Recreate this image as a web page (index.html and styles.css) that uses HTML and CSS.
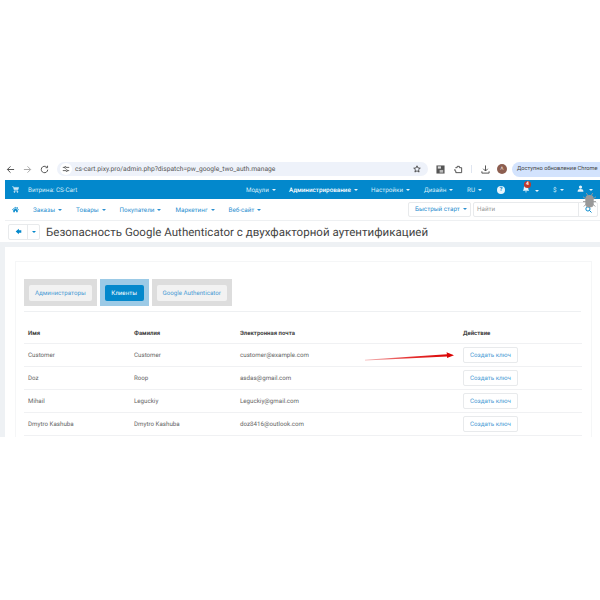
FILE: index.html
```html
<!DOCTYPE html>
<html lang="en">

<head>
    <meta charset="UTF-8">
    <title>Google Authenticator</title>
    <link rel="stylesheet" href="styles.css">
</head>

<body>
    <div class="shot">
        <!-- browser toolbar -->
        <div class="chrome">
            <svg class="ico back" viewBox="0 0 10 10"><path d="M9 5H1.5M5 1.5L1.5 5L5 8.5" /></svg>
            <svg class="ico fwd" viewBox="0 0 10 10"><path d="M1 5h7.5M5 1.5L8.5 5L5 8.5" /></svg>
            <svg class="ico reload" viewBox="0 0 10 10"><path d="M8.6 5.2A3.6 3.6 0 1 1 7.4 2.3M8.4 0.8V3H6.2" /></svg>
            <div class="urlbar">
                <span class="tune"><svg viewBox="0 0 10 10"><path d="M1 3h2M5.5 3H9M1 7h3.5M7 7h2" /><circle cx="4.2" cy="3" r="1.1" /><circle cx="5.8" cy="7" r="1.1" /></svg></span>
                <span class="url">cs-cart.pixy.pro/admin.php?dispatch=pw_google_two_auth.manage</span>
                <svg class="star" viewBox="0 0 10 10"><path d="M5 1l1.2 2.7 2.9.3-2.2 1.9.7 2.9L5 7.3 2.4 8.8l.7-2.9L.9 4l2.9-.3z" /></svg>
            </div>
            <div class="tools">
                <svg class="tool-save" viewBox="0 0 10 10"><rect width="9" height="9" x=".5" y=".5" fill="#555" /><rect x="2" y="1.5" width="3.5" height="2.5" fill="#ddd" /><rect x="4" y="5.5" width="4" height="3" fill="#bbb" /></svg>
                <svg class="tool-ext" viewBox="0 0 10 10"><path d="M1.5 3h2V1.5h2.5V3h2.5v5.500h-6.500V6.500H1V4.500" /></svg>
                <span class="sep"></span>
                <svg class="tool-down" viewBox="0 0 10 10"><path d="M5 .5v6M2.500 4.200L5 6.700L7.500 4.200M1 7v2h8V7" /></svg>
                <span class="avatar">A</span>
                <span class="update">Доступно обновление Chrome</span>
            </div>
        </div>

        <!-- top blue menu -->
        <div class="topbar">
            <svg class="cart" viewBox="0 0 10 10"><path d="M0 1h2l.6 1H9.500L8.500 5.500H3L2 1.500M3.200 7h5" /><circle cx="3.500" cy="8.300" r=".9" /><circle cx="7.800" cy="8.300" r=".9" /></svg>
            <span class="store">Витрина: CS-Cart</span>
            <div class="topmenu">
                <span class="topitem caret w-modules">Модули</span>
                <span class="topitem caret strong w-admin">Администрирование</span>
                <span class="topitem caret w-settings">Настройки</span>
                <span class="topitem caret w-design">Дизайн</span>
                <span class="topitem caret w-lang">RU</span>
                <span class="topitem w-help"><span class="help">?</span></span>
                <span class="topitem caret w-bell">
                    <svg class="bell" viewBox="0 0 10 10"><path d="M5 1c-2 0-2.800 1.500-2.800 3.200 0 1.500-.7 2.300-1.200 3h8c-.5-.7-1.200-1.500-1.200-3C7.800 2.500 7 1 5 1zM4 8h2v1H4z" /></svg>
                    <span class="badge">4</span>
                </span>
                <span class="topitem caret w-cur">$</span>
                <span class="topitem caret w-user">
                    <svg class="user" viewBox="0 0 10 10"><circle cx="5" cy="3" r="2.300" /><path d="M.8 9.500c0-2.800 1.500-3.800 4.200-3.800s4.200 1 4.200 3.800z" /></svg>
                </span>
            </div>
        </div>

        <!-- second menu -->
        <div class="subbar">
            <svg class="home" viewBox="0 0 10 10"><path d="M5 1L0 5.500l.6.6L5 2.300l4.400 3.800.6-.6L8 3.800V1.500H7v1.300zM1.800 6v3h2.300V6.800h1.800V9h2.300V6L5 3.300z" /></svg>
            <span class="subitem caret-blue">Заказы</span>
            <span class="subitem caret-blue">Товары</span>
            <span class="subitem caret-blue">Покупатели</span>
            <span class="subitem caret-blue">Маркетинг</span>
            <span class="subitem caret-blue">Веб-сайт</span>
            <span class="quick caret-blue">Быстрый старт</span>
            <div class="search">
                <span class="search-text">Найти</span>
                <span class="search-btn"><svg viewBox="0 0 10 10"><circle cx="4.200" cy="4.200" r="3" /><path d="M6.500 6.500L9.300 9.300" /></svg></span>
            </div>
        </div>

        <!-- page title -->
        <div class="titlebar">
            <div class="backbtns">
                <span class="backbtn"><svg viewBox="0 0 10 10"><path d="M5.500 1L1 5l4.500 4V6.800H9V3.200H5.500z" /></svg></span>
                <span class="backmore"></span>
            </div>
            <h1>Безопасность Google Authenticator с двухфакторной аутентификацией</h1>
        </div>

        <div class="content">
            <div class="panel">
                <div class="card">
                    <div class="tabs">
                        <div class="tab tab-off"><span class="tab-btn">Администраторы</span></div>
                        <div class="tab tab-on"><span class="tab-btn">Клиенты</span></div>
                        <div class="tab tab-off"><span class="tab-btn">Google Authenticator</span></div>
                    </div>
                    <table>
                        <tr>
                            <th class="c1">Имя</th>
                            <th class="c2">Фамилия</th>
                            <th class="c3">Электронная почта</th>
                            <th>Действие</th>
                        </tr>
                        <tr>
                            <td>Customer</td>
                            <td>Customer</td>
                            <td>customer@example.com</td>
                            <td><span class="keybtn">Создать ключ</span></td>
                        </tr>
                        <tr>
                            <td>Doz</td>
                            <td>Roop</td>
                            <td>asdas@gmail.com</td>
                            <td><span class="keybtn">Создать ключ</span></td>
                        </tr>
                        <tr>
                            <td>Mihail</td>
                            <td>Leguckiy</td>
                            <td>Leguckiy@gmail.com</td>
                            <td><span class="keybtn">Создать ключ</span></td>
                        </tr>
                        <tr>
                            <td>Dmytro Kashuba</td>
                            <td>Dmytro Kashuba</td>
                            <td>doz8416@outlook.com</td>
                            <td><span class="keybtn">Создать ключ</span></td>
                        </tr>
                    </table>
                </div>
            </div>
        </div>

        <!-- red annotation arrow and bug icon lie over the page -->
        <svg class="arrow" viewBox="0 0 92 11">
            <defs>
                <linearGradient id="fade" x1="0" x2="1" y1="0" y2="0">
                    <stop offset="0" stop-color="#f4b8b8" />
                    <stop offset=".5" stop-color="#e53030" />
                    <stop offset="1" stop-color="#d90000" />
                </linearGradient>
            </defs>
            <path d="M1 7.800L83 2.300L82.500 .3L90 3.200L83 6L83 4.600L1 8.400z" fill="url(#fade)" />
        </svg>
        <svg class="bug" viewBox="0 0 16 18">
            <rect x="3.500" y="3.500" width="9" height="14" rx="3" />
            <path d="M4 0.500l2 3M12 0.500l-2 3M0 5l4 3M16 5l-4 3M0 11h4M16 11h-4M1 17l3-3M15 17l-3-3" />
        </svg>
    </div>
</body>

</html>
```

FILE: styles.css
```css
* {
    box-sizing: border-box;
    margin: 0;
    padding: 0;
}

body {
    background-color: #fff;
    font-family: 'Roboto', 'Liberation Sans', sans-serif;
    text-rendering: geometricPrecision;
    overflow: hidden;
}

.shot {
    position: relative;
    margin-top: 158px;
    height: 279px;
    overflow: hidden;
}

/* browser toolbar */
.chrome {
    display: flex;
    align-items: center;
    height: 22px;
    padding-left: 6px;
    background-color: #fff;
}

.ico {
    width: 9px;
    height: 9px;
    fill: none;
    stroke: #555;
    stroke-width: 1.1;
    flex: none;
}

.fwd {
    margin-left: 8px;
    stroke: #aaa;
}

.reload {
    margin-left: 8px;
}

.urlbar {
    display: flex;
    flex: none;
    align-items: center;
    width: 371px;
    height: 14px;
    margin-left: 8px;
    padding: 0 7px 0 3px;
    background-color: #eef2fa;
    border-radius: 7px;
}

.tune {
    display: flex;
    align-items: center;
    justify-content: center;
    width: 12px;
    height: 12px;
    background-color: #fff;
    border-radius: 50%;
}

.tune svg {
    width: 8px;
    height: 8px;
    fill: none;
    stroke: #444;
}

.url {
    margin-left: 3px;
    font-size: 6.7px;
    color: #555;
    white-space: nowrap;
}

.star {
    width: 8px;
    height: 8px;
    margin-left: auto;
    fill: none;
    stroke: #333;
}

.tools {
    display: flex;
    align-items: center;
    flex: none;
    margin-left: 8px;
}

.tools svg {
    width: 9px;
    height: 9px;
    flex: none;
}

.tool-ext,
.tool-down {
    fill: none;
    stroke: #444;
}

.tool-ext {
    margin-left: 9px;
}

.sep {
    width: 1px;
    height: 8px;
    margin: 0 9px 0 8px;
    background-color: #dfe5f0;
}

.avatar {
    width: 10px;
    height: 10px;
    margin-left: 7px;
    border-radius: 50%;
    background-color: #8c5e50;
    color: #e8d8d0;
    font-size: 5px;
    line-height: 10px;
    text-align: center;
}

.update {
    height: 15px;
    width: 120px;
    margin-left: 5px;
    padding-left: 5px;
    background-color: #d3e3fd;
    border-radius: 8px;
    font-size: 5.7px;
    line-height: 15px;
    color: #444;
    white-space: nowrap;
    overflow: hidden;
}

/* blue menu */
.topbar {
    display: flex;
    align-items: center;
    height: 19px;
    margin-left: 5px;
    padding-left: 7px;
    background-color: #0388cc;
    color: #fff;
    font-size: 6.3px;
}

.cart {
    width: 7px;
    height: 7px;
    fill: #cfe8f6;
    stroke: #cfe8f6;
    stroke-width: .8;
}

.store {
    margin-left: 9px;
    color: #d7edf8;
}

.topmenu {
    display: flex;
    align-items: center;
    margin-left: auto;
}

.topitem {
    position: relative;
    display: block;
    color: #d7edf8;
    white-space: nowrap;
}

.strong {
    color: #fff;
    font-weight: 500;
}

.caret::after,
.caret-blue::after {
    content: "";
    display: inline-block;
    margin-left: 3px;
    vertical-align: 1px;
    border-left: 2px solid transparent;
    border-right: 2px solid transparent;
    border-top: 2px solid #e6f4fb;
}

.caret-blue::after {
    border-top-color: #2c8fd0;
}

.w-modules {
    width: 43px;
}

.w-admin {
    width: 82px;
}

.w-settings {
    width: 53px;
}

.w-design {
    width: 43px;
}

.w-lang {
    width: 30px;
}

.w-help {
    width: 25px;
}

.help {
    display: block;
    width: 8px;
    height: 8px;
    border-radius: 50%;
    background-color: #e8f5fc;
    color: #0388cc;
    font-size: 6px;
    font-weight: 700;
    line-height: 8px;
    text-align: center;
}

.w-bell {
    width: 30px;
}

.w-bell::after {
    margin-left: 3px;
}

.bell {
    width: 8px;
    height: 8px;
    fill: #e6f4fb;
}

.badge {
    position: absolute;
    top: -4px;
    left: 2px;
    width: 7px;
    height: 7px;
    border-radius: 50%;
    background-color: #c0392b;
    color: #fff;
    font-size: 5px;
    font-weight: 700;
    line-height: 7px;
    text-align: center;
}

.w-cur {
    width: 25px;
    padding-left: 1px;
}

.w-user {
    width: 23px;
}

.user {
    width: 7px;
    height: 7px;
    fill: #e6f4fb;
}

/* second menu */
.subbar {
    display: flex;
    align-items: center;
    height: 22px;
    margin-left: 5px;
    padding: 0 2px 0 7px;
    background-color: #fff;
    border-bottom: 1px solid #eef0f2;
    color: #2c8fd0;
    font-size: 6.3px;
}

.home {
    width: 7px;
    height: 7px;
    fill: #0388cc;
}

.subitem {
    margin-left: 14px;
    white-space: nowrap;
}

.quick {
    margin-left: auto;
    width: 63px;
    height: 15px;
    padding-left: 6px;
    border: 1px solid #e8eaec;
    line-height: 13px;
    border-radius: 2px;
    white-space: nowrap;
}

.search {
    display: flex;
    width: 125px;
    height: 15px;
    margin-left: 2px;
    border: 1px solid #e8eaec;
    border-radius: 2px;
    color: #999;
}

.search-text {
    flex: 1;
    padding-left: 3px;
    line-height: 13px;
}

.search-btn {
    display: flex;
    align-items: center;
    justify-content: center;
    width: 19px;
    border-left: 1px solid #e8eaec;
}

.search-btn svg {
    width: 7px;
    height: 7px;
    fill: none;
    stroke: #0388cc;
    stroke-width: 1.4;
}

/* page title */
.titlebar {
    display: flex;
    align-items: center;
    height: 21px;
    margin-left: 5px;
    padding-left: 3px;
    background-color: #fff;
}

.backbtns {
    display: flex;
    width: 32px;
    height: 16px;
    border: 1px solid #e8eaec;
    border-radius: 2px;
}

.backbtn {
    display: flex;
    align-items: center;
    justify-content: center;
    width: 19px;
    border-right: 1px solid #e8eaec;
}

.backbtn svg {
    width: 7px;
    height: 7px;
    fill: #0388cc;
}

.backmore {
    flex: 1;
    position: relative;
}

.backmore::after {
    content: "";
    position: absolute;
    top: 6px;
    left: 4px;
    border-left: 2px solid transparent;
    border-right: 2px solid transparent;
    border-top: 2px solid #0388cc;
}

h1 {
    margin-left: 6px;
    font-size: 11.5px;
    font-weight: 400;
    letter-spacing: .03px;
    color: #444;
    white-space: nowrap;
}

/* content */
.content {
    height: 200px;
    padding: 5px 0 0 5px;
    background-color: #eef1f4;
}

.panel {
    height: 195px;
    padding: 14px 8px 0 10px;
    background-color: #fff;
}

.card {
    height: 181px;
    padding: 17px 10px 0 8px;
    border: 1px solid #f5f6f7;
}

.tabs {
    display: flex;
    gap: 3px;
    height: 33px;
    padding-bottom: 5px;
    border-bottom: 1px solid #eef0f2;
}

.tab {
    display: flex;
    align-items: center;
    padding: 0 5px;
    height: 27px;
}

.tab-off {
    background-color: #dddddd;
}

.tab-on {
    background-color: #9ccae6;
}

.tab-btn {
    height: 16px;
    padding: 0 6px;
    border-radius: 2px;
    background-color: #f2f2f2;
    color: #4a9bd4;
    font-size: 6.2px;
    line-height: 16px;
    white-space: nowrap;
}

.tab-on .tab-btn {
    padding: 0 6.5px;
    background-color: #0388cc;
    color: #fff;
}

table {
    width: 558px;
    margin-top: 11px;
    border-collapse: collapse;
    table-layout: fixed;
    font-size: 6.2px;
    color: #666;
}

th {
    height: 20px;
    padding: 1px 0 0 4px;
    color: #444;
    font-size: 6px;
    font-weight: 700;
    text-align: left;
    border-bottom: 1px solid #f0f1f3;
}

td {
    height: 23px;
    padding-left: 4px;
    border-bottom: 1px solid #f0f1f3;
}

.c1,
.c2 {
    width: 106px;
}

.c3 {
    width: 223px;
}

.keybtn {
    display: block;
    width: 55px;
    height: 16px;
    border: 1px solid #e8eaec;
    border-radius: 2px;
    color: #4a9bd4;
    line-height: 14px;
    text-align: center;
}

/* overlays */
.arrow {
    position: absolute;
    top: 194px;
    left: 364px;
    width: 92px;
    height: 11px;
}

.bug {
    position: absolute;
    top: 34px;
    left: 583px;
    width: 13px;
    height: 16px;
    fill: #999;
    stroke: #999;
    stroke-width: 1.2;
}
```
